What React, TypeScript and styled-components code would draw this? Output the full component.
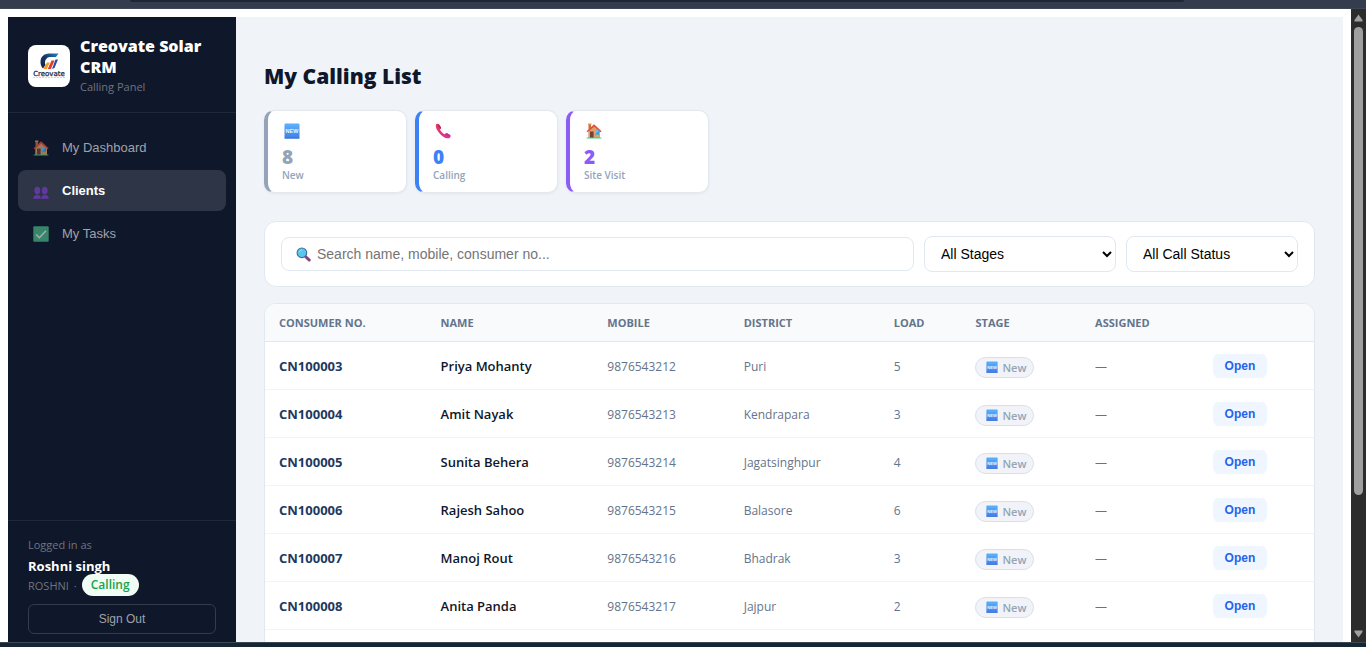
import * as React from 'react';
import styled, { createGlobalStyle } from 'styled-components';

const UI_FONT = "'Open Sans', 'Noto Sans', sans-serif";
const CONTROL_FONT = "'Liberation Sans', Arial, sans-serif";

const GlobalStyle = createGlobalStyle`
  *, *::before, *::after {
    box-sizing: border-box;
  }

  body {
    margin: 0;
    background: #ffffff;
    color: #0f172a;
    font-family: ${UI_FONT};
    font-size: 13px;
  }
`;

interface IClient {
  id: string;
  name: string;
  mobile: string;
  district: string;
  load: number;
}

const clients: IClient[] = [
  { id: 'CN100003', name: 'Priya Mohanty', mobile: '9876543212', district: 'Puri', load: 5 },
  { id: 'CN100004', name: 'Amit Nayak', mobile: '9876543213', district: 'Kendrapara', load: 3 },
  { id: 'CN100005', name: 'Sunita Behera', mobile: '9876543214', district: 'Jagatsinghpur', load: 4 },
  { id: 'CN100006', name: 'Rajesh Sahoo', mobile: '9876543215', district: 'Balasore', load: 6 },
  { id: 'CN100007', name: 'Manoj Rout', mobile: '9876543216', district: 'Bhadrak', load: 3 },
  { id: 'CN100008', name: 'Anita Panda', mobile: '9876543217', district: 'Jajpur', load: 2 },
];

const columns = [
  { label: 'Consumer No.', width: '15.4%' },
  { label: 'Name', width: '15.9%' },
  { label: 'Mobile', width: '13%' },
  { label: 'District', width: '14.3%' },
  { label: 'Load', width: '7.8%' },
  { label: 'Stage', width: '11.4%' },
  { label: 'Assigned', width: '11.2%' },
  { label: '', width: 'auto' },
];

/* ---------- icons ---------- */

interface IIconProps {
  size?: number;
}

const NewIcon = ({ size = 16 }: IIconProps) => (
  <svg width={size} height={size} viewBox="0 0 16 16" aria-hidden="true">
    <defs>
      <linearGradient id="new-bg" x1="0" y1="0" x2="0" y2="1">
        <stop offset="0" stopColor="#5cb3fb" />
        <stop offset="1" stopColor="#3f7fe6" />
      </linearGradient>
    </defs>
    <rect x="0.5" y="0.5" width="15" height="15" rx="1" fill="url(#new-bg)" />
    <rect x="0.5" y="14.5" width="15" height="1" fill="#3a6fd6" />
    <text
      x="8"
      y="10"
      textAnchor="middle"
      fontFamily="Liberation Sans, sans-serif"
      fontWeight="700"
      fontSize="5.5"
      fill="#eaf5ff"
    >
      NEW
    </text>
  </svg>
);

const PhoneIcon = ({ size = 16 }: IIconProps) => (
  <svg width={size} height={size} viewBox="0 0 16 16" aria-hidden="true">
    <defs>
      <linearGradient id="phone-bg" x1="0" y1="0" x2="1" y2="1">
        <stop offset="0" stopColor="#f0374e" />
        <stop offset="1" stopColor="#d8359f" />
      </linearGradient>
    </defs>
    <path
      d="M1 1.6C1.6.6 3 .4 3.9 1.3L5.8 4C6.2 4.8 6 5.5 5.3 6L4.9 6.4C5.9 8.6 7.6 10.2 9.8 11.2L10.3 10.7C10.9 10.1 11.7 10 12.4 10.4L15 12C15.8 12.8 15.6 14 14.8 14.7C13.2 16 10.2 15.3 6.6 12.4C2.5 9 .1 4.3 1 1.6Z"
      fill="url(#phone-bg)"
    />
    <path d="M2.8 1L4 1.5L5.9 4.2C6.2 4.8 6 5.5 5.3 6L3.5 3.8Z" fill="#a92a68" />
    <path d="M10.3 10.7C10.9 10.1 11.7 10 12.4 10.4L15 12C15.4 12.5 15.5 13 15.4 13.5L12 12.5Z" fill="#b53097" />
  </svg>
);

const HouseIcon = ({ size = 16 }: IIconProps) => (
  <svg width={size} height={size} viewBox="0 0 16 16" aria-hidden="true">
    <path d="M2.5 1H5V5L2.5 7Z" fill="#c66e45" />
    <path d="M2 .5H5.4V2H2Z" fill="#dc9454" />
    <path d="M2.3 7.5L8.5 2L14 7.5V15H2.3Z" fill="#e0a06b" />
    <path d="M.6 8.3L8 1.3L15.6 8.3L14.6 9.3L8.2 3.7L1.5 9.2Z" fill="#e2503d" />
    <rect x="4" y="8.5" width="3.6" height="6.5" fill="#73433f" />
    <rect x="9" y="7.6" width="4" height="4" fill="#2fa1e8" />
    <path d="M9 7.6H13L9 11.6Z" fill="#65c5f5" />
    <rect x="0.5" y="14.4" width="15" height="1.2" rx="0.6" fill="#3ed47b" />
  </svg>
);

const PeopleIcon = ({ size = 16 }: IIconProps) => (
  <svg width={size} height={size} viewBox="0 0 16 16" aria-hidden="true">
    <defs>
      <linearGradient id="people-bg" x1="0" y1="0" x2="0" y2="1">
        <stop offset="0" stopColor="#6f3fb5" />
        <stop offset="1" stopColor="#7f35d8" />
      </linearGradient>
    </defs>
    <g fill="url(#people-bg)">
      <ellipse cx="4.3" cy="7.6" rx="2.9" ry="3.8" />
      <ellipse cx="11.7" cy="7.6" rx="2.9" ry="3.8" />
      <path d="M.3 15.8C.3 13 1.6 12 4.2 12S7.7 13 7.7 15.8Z" />
      <path d="M8.3 15.8C8.3 13 9.6 12 12 12S15.7 13 15.7 15.8Z" />
    </g>
  </svg>
);

const CheckIcon = ({ size = 16 }: IIconProps) => (
  <svg width={size} height={size} viewBox="0 0 16 16" aria-hidden="true">
    <rect x="0.3" y="0.3" width="15.4" height="15.4" rx="1" fill="#4ab584" />
    <path d="M3.2 8.5L6.4 11.7L13 4.8" fill="none" stroke="#e3eee9" strokeWidth="1.5" />
  </svg>
);

const SearchIcon = ({ size = 16 }: IIconProps) => (
  <svg width={size} height={size} viewBox="0 0 16 16" aria-hidden="true">
    <path d="M9.8 9.8L14.2 14" stroke="#87427f" strokeWidth="3" strokeLinecap="round" />
    <circle cx="6.3" cy="6.2" r="5.1" fill="#58c9ed" stroke="#476c9e" strokeWidth="1.2" />
    <path d="M3.5 5.5C4 4 5 3.3 6.5 3.2" fill="none" stroke="#93e3f8" strokeWidth="1" />
  </svg>
);

const BrandMark = () => (
  <svg width="42" height="42" viewBox="0 0 42 42" role="img" aria-label="Creovate">
    <defs>
      <linearGradient id="brand-arc" x1="0" y1="1" x2="1" y2="0">
        <stop offset="0" stopColor="#14233f" />
        <stop offset="0.5" stopColor="#17365f" />
        <stop offset="1" stopColor="#2382d6" />
      </linearGradient>
    </defs>
    <path
      d="M30.5 8.500H21C16 8.500 12.500 12 12.500 17C12.500 20 13.500 22 15 23.500L17.500 20C16 16.500 18 12.300 22 12.100H28Z"
      fill="url(#brand-arc)"
    />
    <path d="M15.500 24L18.800 17.500H21.800L18.800 24Z" fill="#f59a2c" />
    <path d="M19.800 24L23.500 15.500H26.500L22.800 24Z" fill="#e2382f" />
    <path d="M24 24L27.500 14.500H30L26.500 23Z" fill="#24539a" />
    <text
      x="21"
      y="30.5"
      textAnchor="middle"
      fontFamily="DejaVu Sans, sans-serif"
      fontSize="7"
      fill="#1b2640"
      stroke="#1b2640"
      strokeWidth="0.25"
    >
      Creovate
    </text>
    <path d="M5 32.5H37" stroke="#c6cad2" strokeWidth="0.8" strokeDasharray="2 1" />
  </svg>
);

/* ---------- window ---------- */

const Window = styled.div`
  display: flex;
  flex-direction: column;
  height: 100vh;
  overflow: hidden;
`;

const TopEdge = styled.div`
  flex: none;
  height: 9px;
  padding-left: 130px;
  padding-right: 182px;
  background: #343d4e;
  border-bottom: 1px solid #3f4757;
`;

const AddressEdge = styled.div`
  height: 2px;
  border-radius: 0 0 8px 8px;
  background: #1f2737;
`;

const BottomEdge = styled.div`
  flex: none;
  height: 5px;
  background: #142534;
  border-top: 1px solid #3b4952;
`;

const Viewport = styled.div`
  display: flex;
  flex: 1;
  min-height: 0;
`;

const Page = styled.div`
  display: flex;
  flex: 1;
  min-width: 0;
  padding: 8px 8px 0;
`;

const ScrollTrack = styled.div`
  display: flex;
  flex: none;
  flex-direction: column;
  align-items: center;
  gap: 5px;
  width: 15px;
  padding: 5px 0 4px;
  background: #2c2c2c;
`;

const ScrollThumb = styled.div`
  width: 9px;
  height: 75%;
  margin-bottom: auto;
  border-radius: 5px;
  background: #9f9f9f;
`;

/* ---------- sidebar ---------- */

const Sidebar = styled.aside`
  display: flex;
  flex: none;
  flex-direction: column;
  width: 228px;
  background: #0f172a;
`;

const Brand = styled.div`
  display: flex;
  align-items: center;
  gap: 10px;
  padding: 19px 20px 17px;
  border-bottom: 1px solid #1f2739;
`;

const BrandLogo = styled.div`
  flex: none;
  width: 42px;
  height: 42px;
  border-radius: 8px;
  background: #ffffff;
`;

const BrandName = styled.div`
  color: #ffffff;
  font-size: 16px;
  font-weight: 800;
  line-height: 21px;
`;

const BrandSub = styled.div`
  margin-top: 1px;
  color: #6f747f;
  font-size: 11px;
  line-height: 16px;
`;

const Nav = styled.nav`
  display: flex;
  flex: 1;
  flex-direction: column;
  gap: 2px;
  padding: 14px 10px;
`;

const NavItem = styled.button<{ $active?: boolean }>`
  display: flex;
  align-items: center;
  gap: 13px;
  height: 41px;
  padding: 0 15px;
  border: 0;
  border-radius: 8px;
  background: ${({ $active }) => ($active ? '#2e3547' : 'transparent')};
  color: ${({ $active }) => ($active ? '#ffffff' : '#9fa2aa')};
  font-family: ${CONTROL_FONT};
  font-size: 13px;
  font-weight: ${({ $active }) => ($active ? 700 : 400)};
  text-align: left;
  cursor: pointer;

  svg {
    opacity: 0.7;
  }
`;

const Account = styled.div`
  padding: 15px 20px 8px;
  border-top: 1px solid #1f2739;
`;

const AccountHint = styled.div`
  color: #6f747f;
  font-size: 11px;
  line-height: 18px;
`;

const AccountName = styled.div`
  margin-top: 2px;
  color: #ffffff;
  font-size: 13px;
  font-weight: 700;
  line-height: 20px;
`;

const AccountRole = styled.div`
  display: flex;
  align-items: center;
  gap: 5px;
  height: 18px;
  color: #6f747f;
  font-size: 11px;
`;

const RoleBadge = styled.span`
  padding: 2px 9px;
  border-radius: 20px;
  background: #f0fdf4;
  color: #16a34a;
  font-size: 12px;
  font-weight: 600;
  line-height: 18px;
`;

const SignOut = styled.button`
  width: 100%;
  height: 30px;
  margin-top: 10px;
  border: 1px solid #343b4b;
  border-radius: 6px;
  background: transparent;
  color: #9fa2aa;
  font-family: ${CONTROL_FONT};
  font-size: 12px;
  cursor: pointer;
`;

/* ---------- main ---------- */

const Main = styled.main`
  flex: 1;
  min-width: 0;
  padding: 44px 28px 0;
  overflow: hidden;
  background: #f0f4f9;
`;

const Title = styled.h1`
  margin: 0 0 18px;
  font-size: 21px;
  font-weight: 800;
  line-height: 31px;
`;

const Stats = styled.div`
  display: grid;
  grid-template-columns: repeat(auto-fill, 143px);
  gap: 8px;
  margin-bottom: 28px;
`;

const StatCard = styled.div<{ $color: string }>`
  display: flex;
  flex-direction: column;
  padding: 12px 14px 10px;
  border: 1px solid #e2e8f0;
  border-left: 4px solid ${({ $color }) => $color};
  border-radius: 10px;
  background: #ffffff;
  box-shadow: 0 1px 3px rgba(15, 23, 42, 0.06);

  svg {
    margin-left: 2px;
  }
`;

const StatValue = styled.div<{ $color: string }>`
  margin-top: 6px;
  color: ${({ $color }) => $color};
  font-size: 19px;
  font-weight: 800;
  line-height: 24px;
`;

const StatLabel = styled.div`
  color: #94a3b8;
  font-size: 10px;
  font-weight: 600;
  line-height: 13px;
`;

const Filters = styled.div`
  display: flex;
  align-items: center;
  gap: 10px;
  margin-bottom: 16px;
  padding: 14px 16px;
  border: 1px solid #e2e8f0;
  border-radius: 12px;
  background: #ffffff;
`;

const SearchBox = styled.label`
  display: flex;
  flex: 1;
  align-items: center;
  gap: 6px;
  height: 34px;
  padding: 0 14px;
  border: 1px solid #e2e8f0;
  border-radius: 8px;
  background: #ffffff;
`;

const SearchInput = styled.input`
  flex: 1;
  min-width: 0;
  padding: 0;
  border: 0;
  outline: 0;
  background: transparent;
  font-family: ${CONTROL_FONT};
  font-size: 14px;

  &::placeholder {
    color: #757575;
  }
`;

const FilterSelect = styled.select<{ $width: number }>`
  width: ${({ $width }) => $width}px;
  height: 36px;
  padding: 0 0 0 12px;
  border: 1px solid #e2e8f0;
  border-radius: 8px;
  background: #ffffff;
  color: #000000;
  font-family: ${CONTROL_FONT};
  font-size: 14px;
`;

const TableCard = styled.div`
  overflow: hidden;
  border: 1px solid #e2e8f0;
  border-radius: 12px;
  background: #ffffff;
`;

const Table = styled.table`
  width: 100%;
  border-collapse: separate;
  border-spacing: 0;
  table-layout: fixed;
`;

const HeadCell = styled.th`
  height: 38px;
  padding: 0 14px;
  border-bottom: 1px solid #e2e8f0;
  background: #f8fafc;
  color: #64748b;
  font-size: 11px;
  font-weight: 700;
  text-align: left;
  text-transform: uppercase;
`;

const Cell = styled.td<{ $tone?: 'id' | 'name' }>`
  height: 48px;
  padding: 1px 14px 0;
  border-bottom: 1px solid #f1f5f9;
  color: ${({ $tone }) => ($tone === 'id' ? '#1e3a5f' : $tone === 'name' ? '#0f172a' : '#64748b')};
  font-size: ${({ $tone }) => ($tone ? 13 : 12)}px;
  font-weight: ${({ $tone }) => ($tone === 'id' ? 700 : $tone === 'name' ? 600 : 400)};
  white-space: nowrap;
`;

const StageBadge = styled.span`
  display: inline-flex;
  align-items: center;
  gap: 4px;
  height: 21px;
  margin-top: 2px;
  padding: 0 7px 0 10px;
  border: 1px solid #d9dfe7;
  border-radius: 20px;
  background: #f1f3f8;
  color: #94a3b8;
  font-size: 11px;
  font-weight: 600;
  vertical-align: middle;
`;

const OpenButton = styled.button`
  height: 24px;
  padding: 0 12px;
  border: 0;
  border-radius: 6px;
  background: #eff6ff;
  color: #2563eb;
  font-family: ${CONTROL_FONT};
  font-size: 12px;
  font-weight: 700;
  cursor: pointer;
`;

const stats = [
  { label: 'New', value: 8, color: '#94a3b8', icon: <NewIcon /> },
  { label: 'Calling', value: 0, color: '#3b82f6', icon: <PhoneIcon /> },
  { label: 'Site Visit', value: 2, color: '#8b5cf6', icon: <HouseIcon /> },
];

const navItems = [
  { label: 'My Dashboard', icon: <HouseIcon /> },
  { label: 'Clients', icon: <PeopleIcon /> },
  { label: 'My Tasks', icon: <CheckIcon /> },
];

const App = () => {
  const [activeNav, setActiveNav] = React.useState('Clients');
  const [query, setQuery] = React.useState('');

  const rows = React.useMemo(() => {
    const term = query.trim().toLowerCase();
    return clients.filter((client) =>
      [client.name, client.mobile, client.id].some((value) => value.toLowerCase().includes(term))
    );
  }, [query]);

  return (
    <Window>
      <GlobalStyle />
      <TopEdge>
        <AddressEdge />
      </TopEdge>
      <Viewport>
        <Page>
          <Sidebar>
            <Brand>
              <BrandLogo>
                <BrandMark />
              </BrandLogo>
              <div>
                <BrandName>Creovate Solar CRM</BrandName>
                <BrandSub>Calling Panel</BrandSub>
              </div>
            </Brand>
            <Nav>
              {navItems.map((item) => (
                <NavItem
                  key={item.label}
                  type="button"
                  $active={item.label === activeNav}
                  onClick={() => setActiveNav(item.label)}
                >
                  {item.icon}
                  {item.label}
                </NavItem>
              ))}
            </Nav>
            <Account>
              <AccountHint>Logged in as</AccountHint>
              <AccountName>Roshni singh</AccountName>
              <AccountRole>
                <span>ROSHNI</span>
                <span>·</span>
                <RoleBadge>Calling</RoleBadge>
              </AccountRole>
              <SignOut type="button">Sign Out</SignOut>
            </Account>
          </Sidebar>

          <Main>
            <Title>My Calling List</Title>
            <Stats>
              {stats.map((stat) => (
                <StatCard key={stat.label} $color={stat.color}>
                  {stat.icon}
                  <StatValue $color={stat.color}>{stat.value}</StatValue>
                  <StatLabel>{stat.label}</StatLabel>
                </StatCard>
              ))}
            </Stats>

            <Filters>
              <SearchBox>
                <SearchIcon size={15} />
                <SearchInput
                  type="text"
                  aria-label="Search clients"
                  placeholder="Search name, mobile, consumer no..."
                  value={query}
                  onChange={(e) => setQuery(e.target.value)}
                />
              </SearchBox>
              <FilterSelect $width={192} aria-label="Stage">
                <option>All Stages</option>
              </FilterSelect>
              <FilterSelect $width={172} aria-label="Call status">
                <option>All Call Status</option>
              </FilterSelect>
            </Filters>

            <TableCard>
              <Table>
                <colgroup>
                  {columns.map((column) => (
                    <col key={column.label} style={{ width: column.width }} />
                  ))}
                </colgroup>
                <thead>
                  <tr>
                    {columns.map((column) => (
                      <HeadCell key={column.label}>{column.label}</HeadCell>
                    ))}
                  </tr>
                </thead>
                <tbody>
                  {rows.map((client) => (
                    <tr key={client.id}>
                      <Cell $tone="id">{client.id}</Cell>
                      <Cell $tone="name">{client.name}</Cell>
                      <Cell>{client.mobile}</Cell>
                      <Cell>{client.district}</Cell>
                      <Cell>{client.load}</Cell>
                      <Cell>
                        <StageBadge>
                          <NewIcon size={12} />
                          New
                        </StageBadge>
                      </Cell>
                      <Cell>—</Cell>
                      <Cell>
                        <OpenButton type="button">Open</OpenButton>
                      </Cell>
                    </tr>
                  ))}
                  <tr>
                    <Cell colSpan={8} />
                  </tr>
                </tbody>
              </Table>
            </TableCard>
          </Main>
        </Page>
        <ScrollTrack aria-hidden="true">
          <svg width="9" height="8" viewBox="0 0 9 8">
            <path d="M4.5 0.5L8.5 6V7.5H0.5V6Z" fill="#9f9f9f" />
          </svg>
          <ScrollThumb />
          <svg width="9" height="8" viewBox="0 0 9 8">
            <path d="M4.5 7.5L8.5 2V0.5H0.5V2Z" fill="#9f9f9f" />
          </svg>
        </ScrollTrack>
      </Viewport>
      <BottomEdge />
    </Window>
  );
};

export default App;
